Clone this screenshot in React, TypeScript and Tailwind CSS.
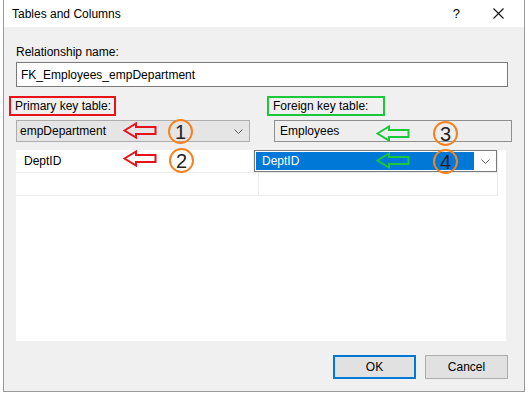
import React from "react";

const font = { fontFamily: '"Liberation Sans", Arial, sans-serif' };

function Chevron() {
  return (
    <svg width="9" height="5" viewBox="0 0 9 5" className="shrink-0">
      <polyline points="0.5,0.5 4.5,4.5 8.5,0.5" fill="none" stroke="#606060" strokeWidth="1" />
    </svg>
  );
}

function Arrow({ color, className }: { color: string; className: string }) {
  return (
    <svg width="34" height="17" viewBox="0 0 34 17" className={className}>
      <path d="M1.5 8.5 L13 1.5 L13 5 L32.5 5 L32.5 12 L13 12 L13 15.5 Z" fill="none" stroke={color} strokeWidth="2" strokeLinejoin="miter" />
    </svg>
  );
}

function Marker({ n, className }: { n: string; className: string }) {
  return (
    <div
      className={`absolute flex h-[25px] w-[25px] items-center justify-center rounded-full border-2 border-[#f5821f] text-[20px] leading-none text-[#222] ${className}`}
      style={font}
    >
      {n}
    </div>
  );
}

export default function App() {
  return (
    <div className="h-[394px] w-[528px] bg-white text-[12px] text-black" style={font}>
      <div className="relative ml-[3px] flex h-[392px] w-[522px] flex-col border-x border-b border-[#9a9a9a] bg-[#f0f0f0]">
        {/* title bar */}
        <div className="flex h-[27px] items-center bg-white pl-[8px] pr-[20px]">
          <span className="flex-1">Tables and Columns</span>
          <span className="mr-[33px] text-[13px]">?</span>
          <svg width="11" height="11" viewBox="0 0 11 11">
            <path d="M0.5 0.5 L10.5 10.5 M10.5 0.5 L0.5 10.5" stroke="#111" strokeWidth="1.1" />
          </svg>
        </div>

        <div className="flex flex-1 flex-col pl-[12px] pr-[12px]">
          <div className="mt-[18px] leading-[14px]">Relationship name:</div>
          <div className="mt-[3px] flex h-[25px] w-[492px] items-center border border-[#7a7a7a] bg-white pl-[4px]">
            FK_Employees_empDepartment
          </div>

          {/* key tables */}
          <div className="mt-[9px] flex items-start">
            <div className="w-[258px]">
              <div className="-ml-[7px] flex h-[20px] w-[107px] items-center border-2 border-[#e8121b] pl-[4px]">
                Primary key table:
              </div>
              <div className="mt-[4px] flex h-[22px] w-[234px] items-center justify-between border border-[#adadad] bg-[#e5e5e5] pl-[3px] pr-[6px]">
                <span>empDepartment</span>
                <Chevron />
              </div>
            </div>
            <div className="w-[238px]">
              <div className="-ml-[7px] flex h-[20px] w-[118px] items-center border-2 border-[#19c93a] pl-[4px]">
                Foreign key table:
              </div>
              <div className="mt-[4px] flex h-[22px] w-[238px] items-center border border-[#8f8f8f] bg-[#eeeeee] pl-[5px]">
                Employees
              </div>
            </div>
          </div>

          {/* columns grid */}
          <div className="mt-[8px] h-[191px] w-[490px] bg-white">
            <div className="w-[482px]">
              <div className="flex h-[23px] border-b border-[#ececec]">
                <div className="flex w-[243px] items-center border-r border-[#ececec] pl-[8px]">DeptID</div>
                <div className="flex flex-1 items-center border-r border-[#ececec]">
                  <div className="flex h-[22px] w-[243px] shrink-0 items-center border border-[#7a7a7a] bg-white pl-[1px] pr-[6px]">
                    <div className="flex h-[18px] flex-1 items-center bg-[#0078d7] pl-[6px] text-white">DeptID</div>
                    <div className="ml-[7px]">
                      <Chevron />
                    </div>
                  </div>
                </div>
              </div>
              <div className="flex h-[23px] border-b border-[#ececec]">
                <div className="w-[243px] border-r border-[#ececec]" />
                <div className="flex-1 border-r border-[#ececec]" />
              </div>
            </div>
          </div>

          {/* buttons */}
          <div className="mt-[14px] flex justify-end gap-[9px] pr-[4px]">
            <button className="flex h-[24px] w-[83px] items-center justify-center border-2 border-[#0078d7] bg-[#e1e1e1]">
              OK
            </button>
            <button className="flex h-[24px] w-[83px] items-center justify-center border border-[#adadad] bg-[#e1e1e1]">
              Cancel
            </button>
          </div>
        </div>

        {/* annotations */}
        <Arrow color="#e8121b" className="absolute left-[119px] top-[122px]" />
        <Arrow color="#e8121b" className="absolute left-[119px] top-[150px]" />
        <Arrow color="#19c93a" className="absolute left-[372px] top-[125px]" />
        <Arrow color="#19c93a" className="absolute left-[372px] top-[152px]" />
        <Marker n="1" className="left-[164px] top-[119px]" />
        <Marker n="2" className="left-[165px] top-[148px]" />
        <Marker n="3" className="left-[429px] top-[121px]" />
        <Marker n="4" className="left-[429px] top-[149px]" />
      </div>
    </div>
  );
}
